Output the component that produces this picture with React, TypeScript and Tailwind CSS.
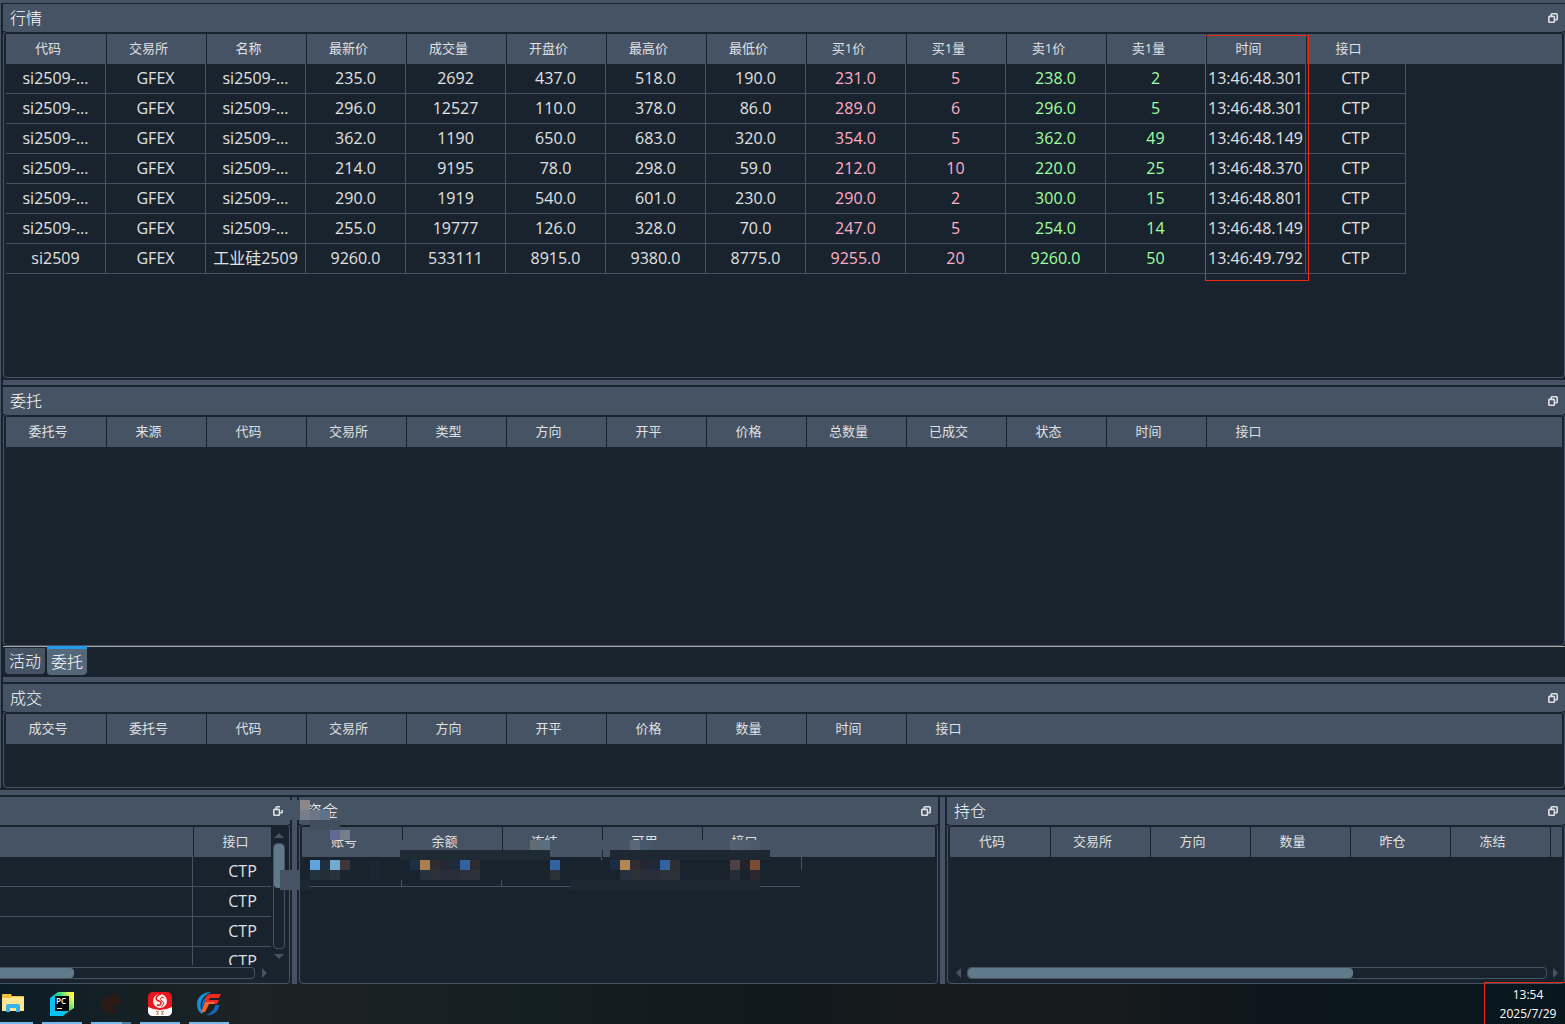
import type { ReactNode } from 'react';

const quotes = [
  ['si2509-...', 'GFEX', 'si2509-...', '235.0', '2692', '437.0', '518.0', '190.0', '231.0', '5', '238.0', '2', '13:46:48.301', 'CTP'],
  ['si2509-...', 'GFEX', 'si2509-...', '296.0', '12527', '110.0', '378.0', '86.0', '289.0', '6', '296.0', '5', '13:46:48.301', 'CTP'],
  ['si2509-...', 'GFEX', 'si2509-...', '362.0', '1190', '650.0', '683.0', '320.0', '354.0', '5', '362.0', '49', '13:46:48.149', 'CTP'],
  ['si2509-...', 'GFEX', 'si2509-...', '214.0', '9195', '78.0', '298.0', '59.0', '212.0', '10', '220.0', '25', '13:46:48.370', 'CTP'],
  ['si2509-...', 'GFEX', 'si2509-...', '290.0', '1919', '540.0', '601.0', '230.0', '290.0', '2', '300.0', '15', '13:46:48.801', 'CTP'],
  ['si2509-...', 'GFEX', 'si2509-...', '255.0', '19777', '126.0', '328.0', '70.0', '247.0', '5', '254.0', '14', '13:46:48.149', 'CTP'],
  ['si2509', 'GFEX', '工业硅2509', '9260.0', '533111', '8915.0', '9380.0', '8775.0', '9255.0', '20', '9260.0', '50', '13:46:49.792', 'CTP'],
];

const quoteColumns = ['代码', '交易所', '名称', '最新价', '成交量', '开盘价', '最高价', '最低价', '买1价', '买1量', '卖1价', '卖1量', '时间', '接口'];
const orderColumns = ['委托号', '来源', '代码', '交易所', '类型', '方向', '开平', '价格', '总数量', '已成交', '状态', '时间', '接口'];
const tradeColumns = ['成交号', '委托号', '代码', '交易所', '方向', '开平', '价格', '数量', '时间', '接口'];
const accountColumns = ['账号', '余额', '冻结', '可用', '接口'];
const positionColumns = ['代码', '交易所', '方向', '数量', '昨仓', '冻结'];

const TH = 'h-[30px] p-0 pr-4 text-[13px] font-normal bg-[#455364] whitespace-nowrap overflow-hidden border-l border-[#19232d] first:border-l-0';
const TD = 'h-[30px] p-0 pb-0.5 text-base leading-5 text-center whitespace-nowrap border-r border-b border-[#455364]';

function cellColor(col: number) {
  if (col === 8 || col === 9) return 'text-[#ffaec9]';
  if (col === 10 || col === 11) return 'text-[#a0ffa0]';
  return '';
}

function DataTable({ columns, rows = [], more = false }: { columns: string[]; rows?: string[][]; more?: boolean }) {
  return (
    <table className="w-full table-fixed border-separate border-spacing-0">
      <thead>
        <tr>
          {columns.map((c) => (
            <th key={c} scope="col" className={`${TH} w-[100px]`}>{c}</th>
          ))}
          <td className={`bg-[#455364] p-0 ${more ? 'border-l border-[#19232d]' : ''}`} />
        </tr>
      </thead>
      <tbody>
        {rows.map((row, i) => (
          <tr key={i}>
            {row.map((v, j) => (
              <td key={j} className={`${TD} ${cellColor(j)}`}>{v}</td>
            ))}
          </tr>
        ))}
      </tbody>
    </table>
  );
}

function TitleBar({ title }: { title: string }) {
  return (
    <div className="h-[27px] shrink-0 bg-[#455364] px-[7px] flex items-center justify-between">
      <h2 className="text-base leading-6 font-light text-white">{title}</h2>
      <button type="button" aria-label="浮动" className="ml-auto">
        <svg width="10" height="10" viewBox="0 0 10 10" fill="none" stroke="#e0e1e3" strokeWidth="1.6" className="block">
          <path d="M3.2 3V1.6q0-.8.8-.8h4.4q.8 0 .8.8V6q0 .8-.8.8H7.2" />
          <rect x=".8" y="3.4" width="5.6" height="5.8" rx=".8" />
        </svg>
      </button>
    </div>
  );
}

function Frame({ className = '', children }: { className?: string; children: ReactNode }) {
  return <div className={`relative border border-[#455364] rounded overflow-hidden p-0.5 ${className}`}>{children}</div>;
}

function Splitter() {
  return <div className="h-[5px] my-0.5 shrink-0 bg-[#455364]" />;
}

function ColumnSplitter() {
  return <div className="w-[5px] mx-0.5 shrink-0 bg-[#455364]" />;
}

function Arrow({ dir, label }: { dir: 'up' | 'down' | 'left' | 'right'; label: string }) {
  const d = { up: 'M0 5 5 0 10 5z', down: 'M0 0h10L5 5z', left: 'M5 0v10L0 5z', right: 'M0 0v10l5-5z' }[dir];
  const flat = dir === 'up' || dir === 'down';
  return (
    <button type="button" aria-label={label} className="shrink-0">
      <svg width={flat ? 10 : 5} height={flat ? 5 : 10} className="block" fill="#455364"><path d={d} /></svg>
    </button>
  );
}

// x, y, width, height, colour of each censored block over the account panel
const blocks: [number, number, number, number, string][] = [
  [280, 800, 20, 10, '#455364'], [290, 810, 10, 10, '#455364'],
  [280, 870, 20, 20, '#455364'],
  [300, 800, 10, 10, '#8b8889'], [300, 810, 10, 10, '#777e8b'],
  [310, 810, 10, 10, '#6b7787'], [320, 810, 10, 10, '#5d738c'],
  [310, 820, 30, 10, '#414e5d'],
  [310, 830, 60, 10, '#455364'], [330, 830, 10, 10, '#5f6b94'], [340, 830, 10, 10, '#757e8b'],
  [400, 840, 10, 10, '#465465'],
  [520, 840, 50, 10, '#455364'], [530, 840, 10, 10, '#5f6d72'], [540, 840, 10, 10, '#587083'],
  [600, 840, 60, 10, '#465465'], [630, 840, 10, 10, '#5b6779'], [640, 840, 10, 10, '#45566f'],
  [700, 840, 60, 10, '#465465'], [730, 840, 10, 10, '#535f70'], [740, 840, 10, 10, '#505e70'], [750, 840, 10, 10, '#4b596b'],
  [400, 850, 150, 10, '#1e2a34'], [610, 850, 160, 10, '#1e2832'],
  [300, 860, 500, 20, '#19232d'], [800, 870, 10, 20, '#19232d'],
  [300, 880, 10, 10, '#1d2731'], [570, 880, 190, 10, '#1e2832'],
  [310, 860, 10, 10, '#62a2df'], [320, 860, 10, 10, '#212e3d'], [330, 860, 10, 10, '#6fabd1'], [340, 860, 10, 10, '#3d3739'],
  [310, 870, 10, 10, '#22323f'], [320, 870, 10, 10, '#242e38'], [330, 870, 10, 10, '#273239'],
  [370, 860, 10, 20, '#1a2733'],
  [410, 860, 10, 10, '#1c2f45'], [420, 860, 10, 10, '#a97f52'], [430, 860, 10, 10, '#302d31'], [440, 860, 10, 10, '#242834'],
  [450, 860, 10, 10, '#1e2b3b'], [460, 860, 10, 10, '#3362a0'], [470, 860, 10, 10, '#2f2c31'],
  [420, 870, 10, 10, '#24323d'], [430, 870, 10, 10, '#2b3138'], [440, 870, 20, 10, '#272d39'], [460, 870, 20, 10, '#2a3138'],
  [550, 860, 10, 10, '#3362a0'], [550, 870, 10, 10, '#2a3238'],
  [610, 860, 10, 10, '#1b2b42'], [620, 860, 10, 10, '#b38752'], [630, 860, 10, 10, '#2f2d31'], [640, 860, 10, 10, '#242731'],
  [650, 860, 10, 10, '#1e2a3a'], [660, 860, 10, 10, '#3362a0'], [670, 860, 10, 10, '#312e33'],
  [620, 870, 10, 10, '#24323d'], [630, 870, 10, 10, '#2b3138'], [640, 870, 20, 10, '#272d39'], [660, 870, 20, 10, '#2a3138'],
  [730, 860, 10, 10, '#4f4043'], [740, 860, 10, 10, '#20222d'], [750, 860, 10, 10, '#7d4a34'],
  [730, 870, 10, 10, '#242c35'], [750, 870, 10, 10, '#2b282d'],
];

function Mosaic() {
  return (
    <svg className="absolute left-[-19px] top-[3px] pointer-events-none" width="530" height="90" viewBox="280 800 530 90" shapeRendering="crispEdges" aria-hidden="true">
      {blocks.map(([x, y, w, h, c], i) => (
        <rect key={i} x={x} y={y} width={w} height={h} fill={c} />
      ))}
    </svg>
  );
}

function FolderIcon() {
  return (
    <svg width="22" height="18" viewBox="0 0 22 18">
      <path d="M0 1q0-1 1-1h8l1 2h11q1 0 1 1v14H0z" fill="#f0c040" />
      <path d="M0 4h9l2-1h11v13q0 1-1 1H1q-1 0-1-1z" fill="#ffe694" />
      <path d="M4 18v-6q0-2 2-2h10q2 0 2 2v6h-4v-4H8v4z" fill="#35b4ea" />
    </svg>
  );
}

function PyCharmIcon() {
  return (
    <svg width="24" height="24" viewBox="0 0 24 24">
      <defs>
        <linearGradient id="pc" x1="0" y1=".6" x2="1" y2="0">
          <stop offset=".2" stopColor="#07c3f2" />
          <stop offset=".5" stopColor="#21d789" />
          <stop offset=".85" stopColor="#fcf84a" />
        </linearGradient>
      </defs>
      <path d="M0 6 8 0h16v16l-6 4-6 4H0z" fill="url(#pc)" />
      <path d="M0 6h5v13h13l-5 5H0z" fill="#07c3f2" />
      <rect x="5" y="4" width="14" height="15" fill="#000" />
      <rect x="7" y="16" width="5" height="1" fill="#fff" />
      <text x="6" y="12" fontSize="8" fontWeight="600" fontFamily="Open Sans, sans-serif" fill="#fff">PC</text>
    </svg>
  );
}

function HorseIcon() {
  return (
    <svg width="24" height="22" viewBox="0 0 24 22" fill="#2c1a17">
      <path d="M17 0l1 3 4 5 1 3-2 2-4-2-2 1v3l3 5-6 1-5-2-2-3-5-1 4-3-3-1 3-5 5-3 4-1z" />
    </svg>
  );
}

function BrokerIcon() {
  return (
    <svg width="24" height="24" viewBox="0 0 24 24">
      <rect width="24" height="24" rx="5" fill="#e8161f" />
      <path d="M0 15q12 6 24 0v4q0 5-5 5H5q-5 0-5-5z" fill="#fff" />
      <circle cx="12" cy="9" r="7" fill="#fbeee6" />
      <path d="M13 2c-6 2-6 6-2 7s2 5-2 4" fill="none" stroke="#e8161f" strokeWidth="1.500" />
      <path d="M16 6c-3-2-5 1-2 3s1 4-1 6" fill="none" stroke="#e8161f" strokeWidth="1" />
      <path d="M8 19.500h3M8 22h3M9.500 19v3M13 19.500h3M14.500 19v3M13 22h3" fill="none" stroke="#c98a60" strokeWidth="1" />
    </svg>
  );
}

function FuturesIcon() {
  return (
    <svg width="24" height="24" viewBox="0 0 24 24">
      <path d="M14 0C5 0 0 6 0 12c0 5 2 8 5 10l1-2C1 14 4 4 14 0z" fill="#1590dc" />
      <path d="M15 2C7 4 4 10 5 16l2-4c1-4 4-6 8-8z" fill="#1b70c4" />
      <path d="M9 23c8 1 13-4 13-10h-4c0 4-4 8-9 10z" fill="#1467b8" />
      <path d="M9 5q1-3 4-3h11l-2 4h-8q-2 0-2 2h10l-2 4h-8l-4 8H5l3-8z" fill="#ec2a24" />
      <path d="M8 10l-4 10h4l4-8h5l1-2z" fill="#f4662b" />
    </svg>
  );
}

const apps = [
  { name: 'PyCharm', icon: <PyCharmIcon /> },
  { name: 'VeighNa', icon: <HorseIcon />, stacked: true },
  { name: '国信', icon: <BrokerIcon /> },
  { name: '期货', icon: <FuturesIcon /> },
];

function Taskbar() {
  return (
    <footer className="relative h-10 shrink-0 flex gap-[9px] bg-[linear-gradient(90deg,#0c1d27_0%,#1d2323_16%,#141f22_34%,#10191d_50%,#181b1b_60%,#181b1b_70%,#0c161c_82%,#08171e_100%)]">
      <button type="button" aria-label="文件资源管理器" className="w-[33px] border-b-2 border-[#76b9ed] flex items-center pl-0.5">
        <FolderIcon />
      </button>
      {apps.map((a) => (
        <button key={a.name} type="button" aria-label={a.name} className="relative w-10 border-b-2 border-[#76b9ed] flex items-center justify-center pt-0.5">
          {a.icon}
          {a.stacked && <span className="absolute right-0 -bottom-0.5 w-[9px] h-0.5 bg-[#4f7ea3]" />}
        </button>
      ))}
      <div className="absolute right-0 -top-0.5 bottom-0 w-[81px] border-l border-t border-[#f0260f] pt-0.5 pr-1.5 pl-3 text-center text-xs leading-[19px] text-white">
        <time className="block">13:54</time>
        <time className="block whitespace-nowrap">2025/7/29</time>
      </div>
    </footer>
  );
}

export default function App() {
  return (
    <div className="min-h-screen flex flex-col overflow-hidden bg-[#19232d] text-[#e0e1e3] font-['Open_Sans','Noto_Sans_CJK_SC',sans-serif]">
      <div className="h-[3px] shrink-0 bg-[#455364]" />

      <main className="flex-1 flex flex-col border-l border-[#455364] pl-0.5 pt-px">
        <TitleBar title="行情" />
        <Frame className="flex-[341_1_0px]">
          <DataTable columns={quoteColumns} rows={quotes} />
          <div className="absolute left-[1201px] top-[3px] w-[104px] h-[246px] border border-[#f0260f] pointer-events-none" />
        </Frame>
        <Splitter />

        <TitleBar title="委托" />
        <Frame className="flex-[226_1_0px]">
          <DataTable columns={orderColumns} />
        </Frame>
        <div role="tablist" className="h-[29px] shrink-0 flex items-start gap-0.5 pl-0.5 border-t border-[#a9a9a9] text-base font-light text-white">
          <button type="button" role="tab" aria-selected="false" className="w-10 h-[26px] mt-px rounded-b bg-[#455364] leading-6">活动</button>
          <button type="button" role="tab" aria-selected="true" className="w-10 h-[29px] -mt-px rounded-b border-t-[3px] border-[#259ae9] bg-[#54687a] leading-6">委托</button>
        </div>
        <Splitter />

        <TitleBar title="成交" />
        <Frame className="flex-[71_1_0px]">
          <DataTable columns={tradeColumns} />
        </Frame>
      </main>

      <Splitter />

      <div className="h-[187px] shrink-0 flex">
        <section className="w-[290px] shrink-0 flex flex-col">
          <TitleBar title="" />
          <Frame className="flex-1 min-h-0 border-l-0 rounded-l-none pl-0 pr-1 pb-1 flex flex-col gap-0.5">
            <div className="flex-1 min-h-0 flex gap-0.5">
              <div className="flex-1 min-w-0 overflow-hidden">
                <table className="w-[293px] table-fixed border-separate border-spacing-0">
                  <thead>
                    <tr>
                      <td className="w-[193px] p-0 bg-[#455364]" />
                      <th scope="col" className={`${TH} w-[100px]`}>接口</th>
                    </tr>
                  </thead>
                  <tbody>
                    {['CTP', 'CTP', 'CTP', 'CTP'].map((v, i) => (
                      <tr key={i}>
                        <td className={TD} />
                        <td className={TD}>{v}</td>
                      </tr>
                    ))}
                  </tbody>
                </table>
              </div>
              <div className="w-3 shrink-0 flex flex-col items-center gap-[5px] pt-1.5 pb-1.5">
                <Arrow dir="up" label="向上滚动" />
                <div className="flex-1 w-3 rounded border border-[#455364]">
                  <div className="h-[44px] rounded bg-[#60798b]" />
                </div>
                <Arrow dir="down" label="向下滚动" />
              </div>
            </div>
            <div className="h-3 flex items-center gap-[7px] pr-[18px]">
              <div className="flex-1 h-3 rounded-r border border-l-0 border-[#455364]">
                <div className="w-[74px] h-full rounded-r bg-[#60798b]" />
              </div>
              <Arrow dir="right" label="向右滚动" />
            </div>
          </Frame>
        </section>

        <ColumnSplitter />

        <section className="relative flex-[639_1_0px] min-w-0 flex flex-col">
          <TitleBar title="资金" />
          <Frame className="flex-1">
            <DataTable columns={accountColumns} rows={[['', '', '', '', '']]} />
          </Frame>
          <Mosaic />
        </section>

        <ColumnSplitter />

        <section className="flex-[618_1_0px] min-w-0 flex flex-col">
          <TitleBar title="持仓" />
          <Frame className="flex-1 pb-1 flex flex-col justify-between">
            <DataTable columns={positionColumns} more />
            <div className="h-3 flex items-center gap-1.5 pl-1.5 pr-1">
              <Arrow dir="left" label="向左滚动" />
              <div className="flex-1 h-3 rounded border border-[#455364]">
                <div className="w-2/3 h-full rounded bg-[#60798b]" />
              </div>
              <Arrow dir="right" label="向右滚动" />
            </div>
          </Frame>
        </section>
      </div>

      <Taskbar />
    </div>
  );
}
